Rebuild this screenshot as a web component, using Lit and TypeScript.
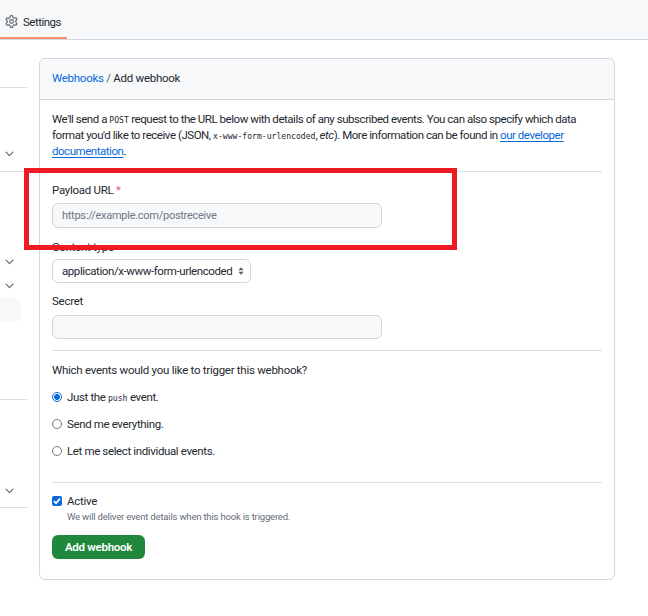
import { LitElement, html, css, svg } from "lit";
import { customElement } from "lit/decorators.js";

const chevron = svg`<path d="M3.2 5.7a.75.75 0 0 1 1.06 0L8 9.44l3.74-3.74a.75.75 0 1 1 1.06 1.06L8.53 11.03a.75.75 0 0 1-1.06 0L3.2 6.76a.75.75 0 0 1 0-1.06Z"/>`;

const sideRows: { h: number; kind: string }[] = [
  { h: 30, kind: "line" },
  { h: 57, kind: "" },
  { h: 16, kind: "chev" },
  { h: 11, kind: "line" },
  { h: 81, kind: "" },
  { h: 16, kind: "chev" },
  { h: 8, kind: "" },
  { h: 16, kind: "chev" },
  { h: 5, kind: "" },
  { h: 24, kind: "current" },
  { h: 78, kind: "line" },
  { h: 82, kind: "" },
  { h: 16, kind: "chev" },
  { h: 10, kind: "line" },
];

@customElement("app-root")
export class AppRoot extends LitElement {
  static styles = css`
    :host {
      display: block;
      position: relative;
      width: 648px;
      height: 616px;
      overflow: hidden;
      background: #fff;
      font-family: Roboto, "Noto Sans", sans-serif;
      font-size: 11.5px;
      letter-spacing: -0.27px;
      line-height: 16px;
      color: #24292f;
    }
    .tabs {
      height: 39px;
      background: #f6f8fa;
      border-bottom: 1px solid #d0d7de;
      display: flex;
    }
    .tab {
      width: 67px;
      height: 39px;
      box-sizing: border-box;
      padding: 6px 0 0 5px;
      border-bottom: 2px solid #fd8c73;
      display: flex;
      align-items: center;
      gap: 5px;
      margin-bottom: -1px;
      letter-spacing: -0.5px;
    }
    .tab svg { fill: #656d76; flex: none; }
    .layout {
      display: flex;
      align-items: flex-start;
      gap: 12px;
      padding-top: 18px;
    }
    .side { width: 27px; flex: none; display: flex; flex-direction: column; }
    .row { box-sizing: border-box; display: flex; align-items: center; padding-left: 2.5px; }
    .row.line { border-bottom: 1px solid #d8dee4; }
    .row.current { background: #f6f8fa; width: 21px; border-radius: 0 6px 6px 0; }
    .row svg { fill: #656d76; }
    .card {
      width: 576px;
      height: 522px;
      box-sizing: border-box;
      border: 1px solid #d0d7de;
      border-radius: 6px;
    }
    .head {
      height: 41px;
      box-sizing: border-box;
      padding: 0 12px 2px;
      display: flex;
      align-items: center;
      background: #f6f8fa;
      border-bottom: 1px solid #d0d7de;
      border-radius: 6px 6px 0 0;
      white-space: pre;
    }
    a { color: #0969da; text-decoration: none; }
    .sep { color: #57606a; }
    .body { padding: 11px 12px 0; }
    .intro { margin: 0; width: 550px; letter-spacing: -0.46px; }
    .intro a { text-decoration: underline; text-underline-offset: 2px; }
    code {
      font-family: "DejaVu Sans Mono", "Liberation Mono", monospace;
      font-size: 8.1px;
      letter-spacing: 0;
      line-height: 1;
    }
    hr {
      border: 0;
      height: 1px;
      background: #d8dee4;
      margin: 0;
    }
    .d1 { margin-top: 12px; }
    label.f { display: block; }
    .req { color: #cf222e; font-weight: 300; }
    .l1 { margin-top: 10px; }
    .input {
      display: flex;
      align-items: center;
      box-sizing: border-box;
      width: 330px;
      height: 25px;
      padding: 0 9px;
      background: #f6f8fa;
      border: 1px solid #d0d7de;
      border-radius: 6px;
      color: #6e7781;
      font-size: 11px;
    }
    .i1 { margin-top: 5px; }
    .l2 { margin-top: 11px; }
    .select {
      margin-top: 4px;
      display: flex;
      align-items: center;
      justify-content: space-between;
      box-sizing: border-box;
      width: 199px;
      height: 24px;
      padding: 0 6px 0 9px;
      background: #fff;
      border: 1px solid #d0d7de;
      border-radius: 6px;
      white-space: nowrap;
      letter-spacing: -0.42px;
    }
    .select svg { fill: #57606a; flex: none; }
    .l3 { margin-top: 10px; }
    .i3 { margin-top: 6px; height: 24px; }
    .d2 { margin-top: 11px; }
    .q { margin-top: 11px; }
    .radios {
      margin-top: 11px;
      display: flex;
      flex-direction: column;
      gap: 11px;
      letter-spacing: -0.37px;
    }
    .radio { display: flex; align-items: center; gap: 5px; height: 16px; }
    .dot {
      width: 10px;
      height: 10px;
      box-sizing: border-box;
      border-radius: 50%;
      border: 1px solid #767676;
      background: #fff;
      flex: none;
    }
    .dot.on {
      border: 1px solid #0969da;
      background: radial-gradient(circle, #0969da 0 2.6px, #fff 3.2px);
    }
    .d3 { margin-top: 23px; }
    .activeRow { margin-top: 10px; display: flex; gap: 5px; }
    .check {
      width: 10px;
      height: 10px;
      margin-top: 3px;
      border-radius: 2px;
      background: #0969da;
      display: flex;
      align-items: center;
      justify-content: center;
      flex: none;
    }
    .check svg { stroke: #fff; fill: none; stroke-width: 1.7; }
    .note { font-size: 9.5px; letter-spacing: -0.19px; color: #656d76; line-height: 16px; }
    .btn {
      margin-top: 10px;
      width: 93px;
      height: 24px;
      box-sizing: border-box;
      display: flex;
      align-items: center;
      justify-content: center;
      background: #1f883d;
      color: #fff;
      font-weight: 600;
      border-radius: 6px;
    }
    .mark {
      position: absolute;
      left: 24px;
      top: 168px;
      width: 433px;
      height: 82px;
      box-sizing: border-box;
      border: 5px solid #ed1c24;
    }
  `;

  render() {
    return html`
      <div class="tabs">
        <div class="tab">
          <svg width="13" height="13" viewBox="0 0 16 16"><path d="M8 0a8.2 8.2 0 0 1 .701.031C9.444.095 9.99.645 10.16 1.29l.288 1.107c.018.066.079.158.212.224.231.114.454.243.668.386.123.082.233.09.299.071l1.103-.303c.644-.176 1.392.021 1.82.63.27.385.506.792.704 1.218.315.675.111 1.422-.364 1.891l-.814.806c-.049.048-.098.147-.088.294.016.257.016.515 0 .772-.01.147.038.246.088.294l.814.806c.475.469.679 1.216.364 1.891a7.977 7.977 0 0 1-.704 1.217c-.428.61-1.176.807-1.82.63l-1.102-.302c-.067-.019-.177-.011-.3.071a5.909 5.909 0 0 1-.668.386c-.133.066-.194.158-.211.224l-.29 1.106c-.168.646-.715 1.196-1.458 1.26a8.006 8.006 0 0 1-1.402 0c-.743-.064-1.289-.614-1.458-1.26l-.289-1.106c-.018-.066-.079-.158-.212-.224a5.738 5.738 0 0 1-.668-.386c-.123-.082-.233-.09-.299-.071l-1.103.303c-.644.176-1.392-.021-1.82-.63a8.12 8.12 0 0 1-.704-1.218c-.315-.675-.111-1.422.363-1.891l.815-.806c.05-.048.098-.147.088-.294a6.214 6.214 0 0 1 0-.772c.01-.147-.038-.246-.088-.294l-.815-.806C.635 6.045.431 5.298.746 4.623a7.92 7.92 0 0 1 .704-1.217c.428-.61 1.176-.807 1.82-.63l1.102.302c.067.019.177.011.3-.071.214-.143.437-.272.668-.386.133-.066.194-.158.211-.224l.29-1.106C6.009.645 6.556.095 7.299.03 7.53.01 7.764 0 8 0Zm-.571 1.525c-.036.003-.108.036-.137.146l-.289 1.105c-.147.561-.549.967-.998 1.189-.173.086-.34.183-.5.29-.417.278-.97.423-1.529.27l-1.103-.303c-.109-.03-.175.016-.195.045-.22.312-.412.644-.573.99-.014.031-.021.11.059.19l.815.806c.411.406.562.957.53 1.456a4.709 4.709 0 0 0 0 .582c.032.499-.119 1.05-.53 1.456l-.815.806c-.081.08-.073.159-.059.19.162.346.353.677.573.989.02.03.085.076.195.046l1.102-.303c.56-.153 1.113-.008 1.53.27.161.107.328.204.501.29.447.222.85.629.997 1.189l.289 1.105c.029.109.101.143.137.146a6.6 6.6 0 0 0 1.142 0c.036-.003.108-.036.137-.146l.289-1.105c.147-.561.549-.967.998-1.189.173-.086.34-.183.5-.29.417-.278.97-.423 1.529-.27l1.103.303c.109.029.175-.016.195-.045.22-.313.411-.644.573-.99.014-.031.021-.11-.059-.19l-.815-.806c-.411-.406-.562-.957-.53-1.456a4.709 4.709 0 0 0 0-.582c-.032-.499.119-1.05.53-1.456l.815-.806c.081-.08.073-.159.059-.19a6.464 6.464 0 0 0-.573-.989c-.02-.03-.085-.076-.195-.046l-1.102.303c-.56.153-1.113.008-1.53-.27a4.44 4.44 0 0 0-.501-.29c-.447-.222-.85-.629-.997-1.189l-.289-1.105c-.029-.11-.101-.143-.137-.146a6.6 6.6 0 0 0-1.142 0ZM11 8a3 3 0 1 1-6 0 3 3 0 0 1 6 0ZM9.5 8a1.5 1.5 0 1 0-3.001.001A1.5 1.5 0 0 0 9.5 8Z"/></svg>
          <span>Settings</span>
        </div>
      </div>
      <div class="layout">
        <div class="side">
          ${sideRows.map(
            (r) => html`<div class="row ${r.kind}" style="height:${r.h}px">
              ${r.kind === "chev"
                ? html`<svg width="13" height="13" viewBox="0 0 16 16">${chevron}</svg>`
                : ""}
            </div>`
          )}
        </div>
        <div class="card">
          <div class="head"><a href="#">Webhooks</a><span class="sep"> / </span><span>Add webhook</span></div>
          <div class="body">
            <p class="intro">We'll send a <code>POST</code> request to the URL below with details of any subscribed events. You can also specify which data format you'd like to receive (JSON, <code>x-www-form-urlencoded</code>, <em>etc</em>). More information can be found in <a href="#">our developer documentation</a>.</p>
            <hr class="d1" />
            <label class="f l1">Payload URL <span class="req">*</span></label>
            <div class="input i1">https://example.com/postreceive</div>
            <label class="f l2">Content type</label>
            <div class="select">
              <span>application/x-www-form-urlencoded</span>
              <svg width="6" height="10" viewBox="0 0 8 12"><path d="M4 1 7.5 5H.5zM4 11 .5 7h7z"/></svg>
            </div>
            <label class="f l3">Secret</label>
            <div class="input i3"></div>
            <hr class="d2" />
            <div class="f q">Which events would you like to trigger this webhook?</div>
            <div class="radios">
              <div class="radio"><span class="dot on"></span><span>Just the <code>push</code> event.</span></div>
              <div class="radio"><span class="dot"></span><span>Send me everything.</span></div>
              <div class="radio"><span class="dot"></span><span>Let me select individual events.</span></div>
            </div>
            <hr class="d3" />
            <div class="activeRow">
              <span class="check"><svg width="8" height="8" viewBox="0 0 8 8"><path d="M1 4.2 3 6.2 7 1.6"/></svg></span>
              <div>
                <div>Active</div>
                <div class="note">We will deliver event details when this hook is triggered.</div>
              </div>
            </div>
            <div class="btn">Add webhook</div>
          </div>
        </div>
      </div>
      <div class="mark"></div>
    `;
  }
}
